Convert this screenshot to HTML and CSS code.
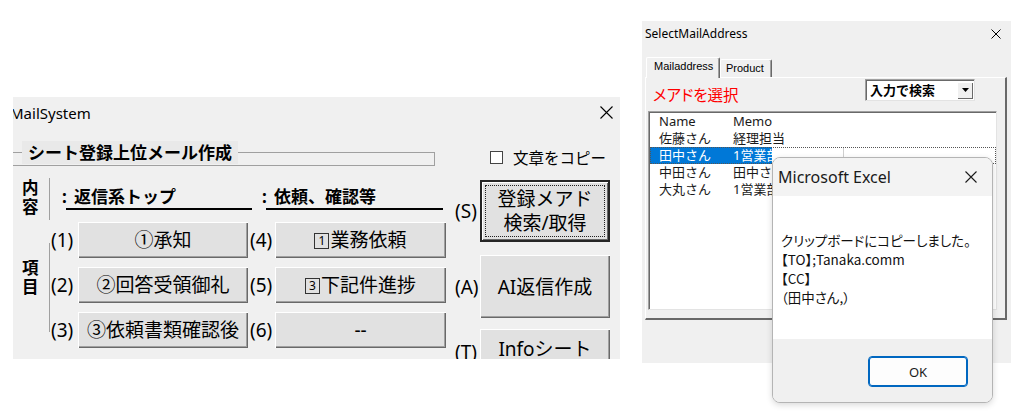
FILE: index.html
```html
<!DOCTYPE html>
<html lang="ja">
<head>
    <meta charset="UTF-8">
    <title>MailSystem</title>
    <link rel="stylesheet" href="styles.css">
</head>
<body>
    <!-- MailSystem form -->
    <div class="win win-mail">
        <div class="titlebar">
            <span class="title">MailSystem</span>
            <svg class="x-icon" width="13" height="13" viewBox="0 0 13 13"><path d="M0.5 0.5L12.5 12.5M12.5 0.5L0.5 12.5" stroke="#000" stroke-width="1.1" fill="none"/></svg>
        </div>
        <div class="mail-body">
            <div class="mail-main">
                <div class="frame-head"><span class="frame-label">シート登録上位メール作成</span></div>

                <div class="content-row">
                    <div class="side-label">内<br>容</div>
                    <div class="fields">
                        <span class="field field-a"><span class="colon">:</span><span class="line">返信系トップ</span></span>
                        <span class="field field-b"><span class="colon">:</span><span class="line">依頼、確認等</span></span>
                    </div>
                </div>

                <div class="item-grid">
                    <div class="side-label items">項<br>目</div>
                    <span class="num">(1)</span><button class="btn">①承知</button>
                    <span class="num num-r">(4)</span><button class="btn"><span class="box-num">1</span>業務依頼</button>
                    <span class="num">(2)</span><button class="btn">②回答受領御礼</button>
                    <span class="num num-r">(5)</span><button class="btn"><span class="box-num">3</span>下記件進捗</button>
                    <span class="num">(3)</span><button class="btn">③依頼書類確認後</button>
                    <span class="num num-r">(6)</span><button class="btn">--</button>
                </div>
            </div>

            <div class="mail-side">
                <label class="copy-check"><span class="check"></span>文章をコピー</label>
                <div class="side-row row-s">
                    <span class="num">(S)</span>
                    <button class="btn btn-big btn-default"><span class="focus-rect">登録メアド<br>検索/取得</span></button>
                </div>
                <div class="side-row row-a">
                    <span class="num">(A)</span>
                    <button class="btn btn-big">AI返信作成</button>
                </div>
                <div class="side-row row-t">
                    <span class="num">(T)</span>
                    <button class="btn btn-big">Infoシート</button>
                </div>
            </div>
        </div>
    </div>

    <!-- SelectMailAddress form -->
    <div class="win win-select">
        <div class="titlebar">
            <span class="title">SelectMailAddress</span>
            <svg class="x-icon" width="10" height="10" viewBox="0 0 10 10"><path d="M0.5 0.5L9.5 9.5M9.5 0.5L0.5 9.5" stroke="#000" stroke-width="1" fill="none"/></svg>
        </div>
        <div class="tabs">
            <span class="tab active">Mailaddress</span>
            <span class="tab plain">Product</span>
        </div>
        <div class="tab-panel">
            <div class="panel-top">
                <span class="pick">メアドを選択</span>
                <div class="combo">
                    <span class="combo-text">入力で検索</span>
                    <span class="drop"><svg width="7" height="4" viewBox="0 0 7 4"><path d="M0 0H7L3.5 4Z" fill="#000"/></svg></span>
                </div>
            </div>
            <div class="listbox">
                <div class="list-row"><span class="col-name">Name</span><span>Memo</span></div>
                <div class="list-row"><span class="col-name">佐藤さん</span><span>経理担当</span></div>
                <div class="list-row selected"><span class="col-name">田中さん</span><span>1営業部</span></div>
                <div class="list-row"><span class="col-name">中田さん</span><span>田中さんの上司</span></div>
                <div class="list-row"><span class="col-name">大丸さん</span><span>1営業部</span></div>
            </div>
        </div>
    </div>

    <!-- Message box -->
    <div class="dialog">
        <div class="dialog-title">
            <span>Microsoft Excel</span>
            <svg class="x-icon" width="12" height="12" viewBox="0 0 12 12"><path d="M0.5 0.5L11.5 11.5M11.5 0.5L0.5 11.5" stroke="#1a1a1a" stroke-width="1.1" fill="none"/></svg>
        </div>
        <div class="dialog-msg">
            クリップボードにコピーしました。<br>
            【TO】;Tanaka.comm<br>
            【CC】<br>
            （田中さん,）
        </div>
        <div class="dialog-foot">
            <button class="ok">OK</button>
        </div>
    </div>
</body>
</html>
```

FILE: styles.css
```css
* {
    margin: 0;
    padding: 0;
    box-sizing: border-box;
}

body {
    width: 1024px;
    height: 414px;
    position: relative;
    overflow: hidden;
    background: #fff;
    color: #000;
    font-family: "Noto Sans", "Noto Sans CJK JP", sans-serif;
}

.win {
    position: absolute;
    background: #f0f0f0;
    overflow: hidden;
}

.titlebar {
    display: flex;
    align-items: center;
    justify-content: space-between;
}

.x-icon {
    display: block;
}

/* ---------- MailSystem ---------- */

.win-mail {
    left: 13px;
    top: 97px;
    width: 607px;
    height: 262px;
}

.win-mail .titlebar {
    height: 31px;
    padding-right: 7px;
}

.win-mail .title {
    font-size: 15px;
    margin-left: -3px;
}

.mail-body {
    display: flex;
}

.mail-main {
    width: 442px;
}

.frame-head {
    position: relative;
    width: 422px;
    height: 14px;
    margin-top: 24px;
    border-top: 1px solid #a0a0a0;
    border-bottom: 1px solid #a0a0a0;
    border-right: 1px solid #a0a0a0;
}

.frame-label {
    position: absolute;
    left: 9px;
    top: -12px;
    height: 23px;
    padding: 0 6px;
    background: #e9e9e9;
    font-size: 17px;
    font-weight: bold;
    line-height: 23px;
    white-space: nowrap;
}

.content-row {
    display: flex;
    height: 42px;
    margin-top: 12px;
}

.side-label {
    width: 37px;
    border-right: 1px solid #a0a0a0;
    padding-left: 9px;
    font-size: 16.5px;
    font-weight: bold;
    line-height: 19px;
}

.fields {
    display: flex;
    gap: 10px;
    padding-left: 12px;
    padding-top: 8px;
}

.field {
    display: flex;
    font-size: 17px;
    font-weight: bold;
    line-height: 22px;
    height: 24px;
}

.field .colon {
    width: 4px;
}

.field .line {
    border-bottom: 2px solid #000;
    padding-left: 8px;
}

.field-a .line {
    width: 186px;
}

.field-b .line {
    width: 177px;
}

.item-grid {
    display: grid;
    grid-template-columns: 37px 28px 170px 27px 171px;
    grid-template-rows: repeat(3, 36px);
    row-gap: 9px;
    margin-top: 2px;
}

.side-label.items {
    grid-column: 1;
    grid-row: 1 / 4;
    margin: 21px 0 16px;
    padding-top: 15px;
}

.num {
    font-size: 19px;
    line-height: 36px;
    padding-left: 1px;
    white-space: nowrap;
}

.num-r {
    padding-left: 2px;
}

.btn {
    font: inherit;
    font-size: 19px;
    line-height: 34px;
    color: #000;
    background: #e1e1e1;
    border: none;
    box-shadow: inset 1px 1px 0 #fff, inset -1px -1px 0 #696969, inset -2px -2px 0 #a0a0a0;
    text-align: center;
    white-space: nowrap;
}

.box-num {
    display: inline-block;
    width: 15px;
    height: 16px;
    margin-right: 1px;
    border: 1px solid #333;
    font-size: 12px;
    line-height: 14px;
    text-align: center;
    vertical-align: 2px;
}

.mail-side {
    width: 165px;
    display: flex;
    flex-direction: column;
}

.copy-check {
    display: flex;
    align-items: center;
    gap: 10px;
    height: 16px;
    margin-top: 21px;
    padding-left: 35px;
    font-size: 15.5px;
    white-space: nowrap;
}

.check {
    width: 13px;
    height: 13px;
    background: #fff;
    border: 1px solid #444;
}

.side-row {
    display: flex;
    align-items: center;
}

.side-row .num {
    width: 25px;
    padding-left: 0;
}

.btn-big {
    width: 130px;
    height: 63px;
    line-height: 24px;
}

.row-s {
    margin-top: 15px;
}

.row-s .btn-big {
    height: 62px;
}

.row-a {
    margin-top: 13px;
}

.row-t {
    margin-top: 11px;
    align-items: flex-start;
}

.row-t .num {
    margin-top: 5px;
}

.row-t .btn-big {
    height: 40px;
}

.btn-default {
    border: 2px solid #262626;
    box-shadow: inset 1px 1px 0 #fff, inset -1px -1px 0 #696969;
    padding: 3px;
}

.focus-rect {
    display: flex;
    align-items: center;
    justify-content: center;
    height: 100%;
    border: 1px dotted #222;
}

/* ---------- SelectMailAddress ---------- */

.win-select {
    left: 642px;
    top: 21px;
    width: 369px;
    height: 342px;
}

.win-select .titlebar {
    height: 25px;
    padding: 0 10px 0 3px;
    font-size: 12px;
}

.tabs {
    display: flex;
    align-items: flex-end;
    height: 20px;
    margin-top: 11px;
    padding-left: 4px;
}

.tab {
    font-family: "Liberation Sans", Arial, sans-serif;
    font-size: 11px;
    color: #000;
    background: #f0f0f0;
    border-left: 1px solid #fff;
    border-top: 1px solid #fff;
    border-right: 1px solid #696969;
    box-shadow: inset -1px 0 0 #a0a0a0;
    border-radius: 2px 2px 0 0;
}

.tab.active {
    width: 74px;
    height: 21px;
    padding: 2px 0 0 7px;
    margin-bottom: -1px;
    position: relative;
    z-index: 1;
}

.tab.plain {
    width: 52px;
    height: 18px;
    padding: 2px 0 0 5px;
}

.tab-panel {
    width: 362px;
    height: 243px;
    margin-left: 3px;
    border-top: 1px solid #fff;
    border-left: 1px solid #fff;
    border-right: 2px solid #696969;
    border-bottom: 2px solid #696969;
}

.panel-top {
    display: flex;
    justify-content: space-between;
    height: 24px;
    padding-right: 30px;
}

.pick {
    margin: 6px 0 0 7px;
    color: #f00;
    font-family: "Noto Sans CJK JP", sans-serif;
    font-size: 15.5px;
    line-height: 20px;
    font-feature-settings: "palt";
}

.combo {
    display: flex;
    align-items: center;
    justify-content: space-between;
    width: 110px;
    height: 22px;
    margin-top: 1px;
    padding: 0 1px 0 4px;
    background: #fff;
    border: 1px solid #a0a0a0;
    border-right-color: #e3e3e3;
    border-bottom-color: #e3e3e3;
    box-shadow: inset 1px 1px 0 #696969;
}

.combo-text {
    font-family: "Noto Sans CJK JP", sans-serif;
    font-size: 13px;
    font-weight: bold;
    line-height: 18px;
}

.drop {
    display: flex;
    align-items: center;
    justify-content: center;
    width: 16px;
    height: 17px;
    background: #f0f0f0;
    box-shadow: inset 1px 1px 0 #fff, inset -1px -1px 0 #696969;
}

.listbox {
    width: 349px;
    height: 199px;
    margin: 9px 0 0 2px;
    padding: 1px 0 0 1px;
    background: #fff;
    border: 1px solid #a0a0a0;
    border-right-color: #e3e3e3;
    border-bottom-color: #e3e3e3;
    box-shadow: inset 1px 1px 0 #696969;
    font-size: 13px;
    color: #1a1a1a;
}

.list-row {
    display: flex;
    height: 17px;
    padding-left: 9px;
    line-height: 17px;
    white-space: nowrap;
}

.col-name {
    width: 74px;
}

.list-row.selected {
    color: #fff;
    outline: 1px dotted #555;
    outline-offset: -1px;
    background:
        linear-gradient(#cfcfcf, #cfcfcf) 193px 0 / 1px 100% no-repeat,
        linear-gradient(to right, #0078d7 122px, #fff 122px);
}

/* ---------- Message box ---------- */

.dialog {
    position: absolute;
    left: 772px;
    top: 157px;
    width: 221px;
    height: 246px;
    display: flex;
    flex-direction: column;
    background: #fff;
    border: 1px solid #b4b4b4;
    border-radius: 8px;
    overflow: hidden;
    box-shadow: 0 2px 6px rgba(0, 0, 0, 0.15);
}

.dialog-title {
    display: flex;
    align-items: center;
    justify-content: space-between;
    height: 38px;
    padding: 0 15px 0 5px;
    background: #f3f3f3;
    font-size: 16px;
    color: #1a1a1a;
}

.dialog-msg {
    flex: 1;
    padding: 35px 0 0 8px;
    font-family: "Noto Sans CJK JP", sans-serif;
    font-size: 13.5px;
    line-height: 19px;
    font-feature-settings: "palt";
    color: #111;
    white-space: nowrap;
}

.dialog-foot {
    height: 63px;
    padding: 17px 0 0 95px;
    background: #f0f0f0;
}

.ok {
    width: 100px;
    height: 31px;
    font-family: "Noto Sans", sans-serif;
    font-size: 13px;
    color: #1a1a1a;
    background: #fdfdfd;
    border: 1px solid #0067c0;
    box-shadow: inset 0 0 0 1px #0067c0;
    border-radius: 4px;
}
```
